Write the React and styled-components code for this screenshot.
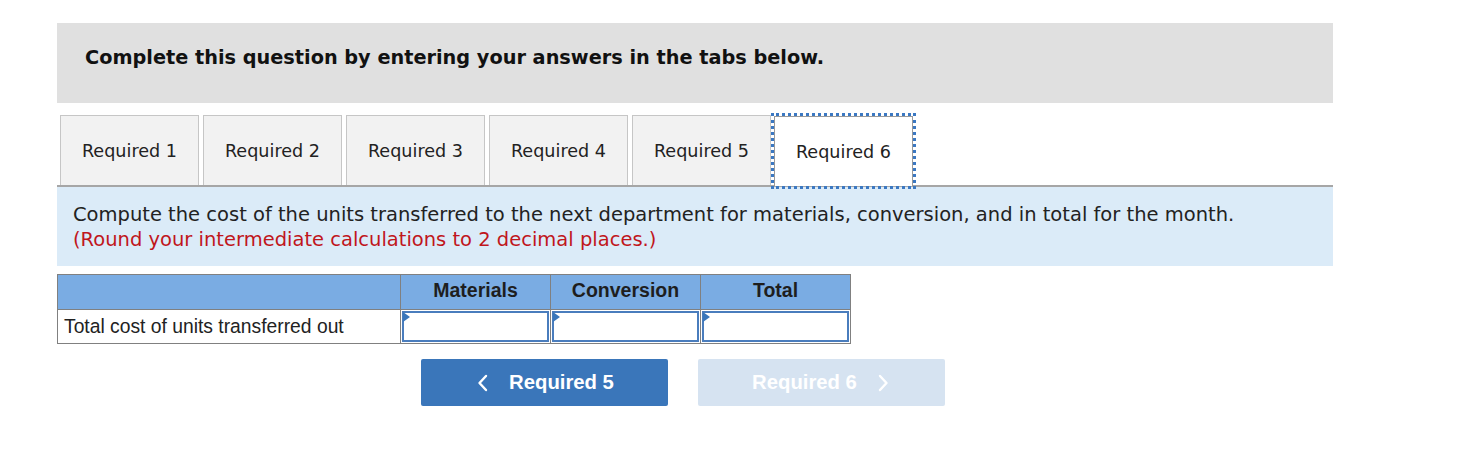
import React from 'react';
import styled, { createGlobalStyle } from 'styled-components';

const Global = createGlobalStyle`
  body {
    margin: 0;
    background: #fff;
    font-family: "DejaVu Sans", Verdana, sans-serif;
    color: #1a1a1a;
  }
`;

const Page = styled.div`
  width: 1276px;
  padding: 23px 0 0 57px;
`;

const Banner = styled.div`
  background: #e0e0e0;
  height: 80px;
  display: flex;
  align-items: center;
  padding: 0 0 12px 28px;
  box-sizing: border-box;
  font-weight: bold;
  font-size: 19.3px;
  color: #111;
  white-space: nowrap;
`;

const Tabs = styled.div`
  display: flex;
  gap: 4px;
  margin-top: 12px;
  padding-left: 3px;
  border-bottom: 2px solid #a6a6a6;
  height: 70px;
  box-sizing: content-box;
`;

const Tab = styled.div`
  width: 139px;
  height: 70px;
  box-sizing: border-box;
  display: flex;
  align-items: center;
  justify-content: center;
  font-size: 17.6px;
  color: #222;
  white-space: nowrap;
  background: ${p => (p.$active ? '#fff' : '#f2f2f2')};
  border: 1px solid #c6c6c6;
  border-bottom: none;
  ${p => p.$active && `
    border-color: #9a9a9a;
    outline: 3px dotted #3b78c2;
    outline-offset: 0px;
    width: 139px;
    margin-left: -1px;
    margin-top: 1px;
    height: 70px;
  `}
`;

const Info = styled.div`
  background: #dbebf8;
  padding: 15px 16px 14px 16px;
  font-size: 19.5px;
  line-height: 25px;
  color: #222;
  white-space: nowrap;
`;

const Red = styled.div`
  color: #c0161c;
`;

const Table = styled.table`
  margin-top: 8px;
  border-collapse: collapse;
  font-family: "Liberation Sans", Arial, sans-serif;
`;

const HeadCell = styled.th`
  background: #7aace3;
  border: 1px solid #808080;
  height: 31px;
  width: ${p => p.$w}px;
  font-size: 19.5px;
  font-weight: bold;
  color: #1e1e1e;
  padding: 0 0 3px;
`;

const LabelCell = styled.td`
  border: 1px solid #808080;
  height: 33px;
  font-size: 19.3px;
  color: #222;
  padding: 0 6px;
  white-space: nowrap;
`;

const InputCell = styled.td`
  border: 1px solid #808080;
  padding: 1px;
`;

const Field = styled.div`
  height: 31px;
  box-sizing: border-box;
  border: 2px solid #4a7dbd;
  background: #fff;
  position: relative;
  &::before {
    content: '';
    position: absolute;
    left: -1px;
    top: -1px;
    border-top: 5px solid transparent;
    border-bottom: 5px solid transparent;
    border-left: 7px solid #3a76ba;
  }
`;

const Buttons = styled.div`
  display: flex;
  gap: 30px;
  margin-top: 15px;
  margin-left: 364px;
`;

const NavButton = styled.div`
  width: 247px;
  height: 47px;
  border-radius: 2px;
  background: ${p => (p.$disabled ? '#d6e3f1' : '#3a76ba')};
  color: #fff;
  display: flex;
  align-items: center;
  justify-content: center;
  gap: 18px;
  font-family: "Liberation Sans", Arial, sans-serif;
  font-weight: bold;
  font-size: 20.3px;
  svg {
    width: 16px;
    height: 18px;
  }
`;

const Chevron = ({ dir }) => (
  <svg viewBox="0 0 16 18" fill="none" stroke="#fff" strokeWidth="2.4" strokeLinecap="round" strokeLinejoin="round">
    {dir === 'left' ? <path d="M11 2 L4.5 9 L11 16" /> : <path d="M5 2 L11.5 9 L5 16" />}
  </svg>
);

export default function App() {
  return (
    <Page>
      <Global />
      <Banner>Complete this question by entering your answers in the tabs below.</Banner>
      <Tabs>
        {[1, 2, 3, 4, 5, 6].map(n => (
          <Tab key={n} $active={n === 6}>Required {n}</Tab>
        ))}
      </Tabs>
      <Info>
        Compute the cost of the units transferred to the next department for materials, conversion, and in total for the month.
        <Red>(Round your intermediate calculations to 2 decimal places.)</Red>
      </Info>
      <Table>
        <thead>
          <tr>
            <HeadCell $w={342} />
            <HeadCell $w={149}>Materials</HeadCell>
            <HeadCell $w={149}>Conversion</HeadCell>
            <HeadCell $w={149}>Total</HeadCell>
          </tr>
        </thead>
        <tbody>
          <tr>
            <LabelCell>Total cost of units transferred out</LabelCell>
            <InputCell><Field /></InputCell>
            <InputCell><Field /></InputCell>
            <InputCell><Field /></InputCell>
          </tr>
        </tbody>
      </Table>
      <Buttons>
        <NavButton>
          <Chevron dir="left" />
          Required 5
        </NavButton>
        <NavButton $disabled>
          Required 6
          <Chevron dir="right" />
        </NavButton>
      </Buttons>
    </Page>
  );
}
